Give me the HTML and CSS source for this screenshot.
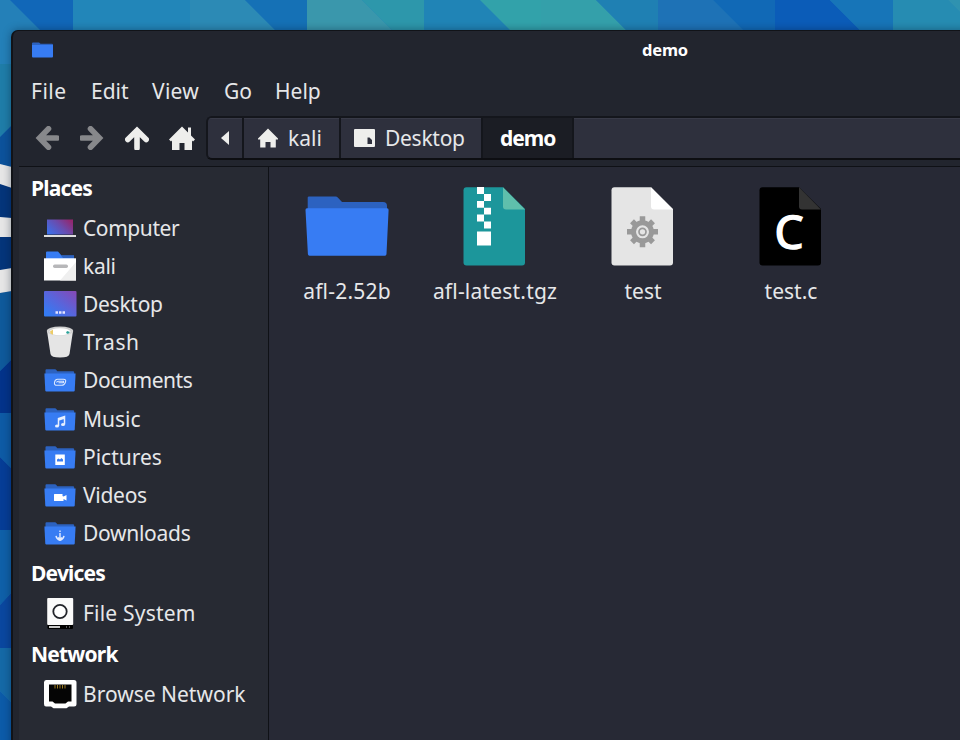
FILE: index.html
```html
<!DOCTYPE html>
<html lang="en">
<head>
<meta charset="utf-8">
<title>demo</title>
<link rel="stylesheet" href="styles.css">
</head>
<body>
<svg class="wallpaper" viewBox="0 0 960 740" aria-hidden="true">
  <rect width="960" height="740" fill="#2480b8"/>
  <path d="M10 0H73V31H41Z" fill="#1167b8"/>
  <path d="M73 0H190V31H73Z" fill="#2286b9"/>
  <path d="M190 0H245L276 31H190Z" fill="#2c8ab5"/>
  <path d="M245 0H307V31H276Z" fill="#1571b6"/>
  <path d="M307 0H362L393 31H307Z" fill="#3a97ac"/>
  <path d="M362 0H424V31H393Z" fill="#2d97ab"/>
  <path d="M424 0H480L511 31H424Z" fill="#2084b6"/>
  <path d="M480 0H541V31H511Z" fill="#32a2aa"/>
  <path d="M541 0H596L627 31H541Z" fill="#34a0aa"/>
  <path d="M596 0H658V31H627Z" fill="#1f80b3"/>
  <path d="M658 0H713L744 31H658Z" fill="#1e72b6"/>
  <path d="M713 0H775V31H744Z" fill="#1169b6"/>
  <path d="M775 0H830L861 31H775Z" fill="#0b5cb8"/>
  <path d="M830 0H893V31H861Z" fill="#1775b8"/>
  <path d="M893 0H948L979 31H893Z" fill="#268cb2"/>
  <path d="M948 0H960V12Z" fill="#2f92b0"/>
  <path d="M0 64H12V125L0 137Z" fill="#1f7da8"/>
  <path d="M0 137L12 125V180H0Z" fill="#0c529b"/>
  <path d="M0 175H12V300H0Z" fill="#04357a"/>
  <path d="M0 293L12 291V359L0 371Z" fill="#0f5a9b"/>
  <path d="M0 164L12 167V188L0 184ZM0 217L12 218V237H0ZM0 270L12 268V291L0 293Z" fill="#e6e6e6"/>
  <path d="M0 371L12 359V413H0Z" fill="#03338a"/>
  <path d="M0 413H12V469L0 457Z" fill="#0e5ba5"/>
  <path d="M0 457L12 469V530H0Z" fill="#063d96"/>
  <path d="M0 530H12V592L0 605Z" fill="#0f60a8"/>
  <path d="M0 605L12 592V648H0Z" fill="#0a479f"/>
  <path d="M0 648H12V703L0 691Z" fill="#1569a6"/>
  <path d="M0 691L12 703V740H0Z" fill="#0c5ba8"/>
</svg>

<svg class="symbols" aria-hidden="true">
  <symbol id="folder" viewBox="0 0 32 24">
    <path d="M1.500 1.500q0-1 1-1H11q.8 0 1.300.7L13.300 2.500H29q1.200 0 1.200 1.200V10H1.500Z" fill="#2c62c0"/>
    <path d="M.4 4.700H31.600L30.700 22q-.1.800-1 .8H2.300q-.9 0-1-.8Z" fill="#377cf3"/>
  </symbol>
  <symbol id="house" viewBox="0 0 20 20">
    <path d="M10 .5L0 10.500V11.500H2.200V19.500H7.500V14H12.500V19.500H17.800V11.500H20V10.500Z" fill="#eeeeec"/>
  </symbol>
</svg>

<main class="window">
  <header class="titlebar">
    <svg class="app-icon" viewBox="0 0 21 16"><path d="M0 1.500Q0 .5 1 .5H7L8.500 1.700H20Q21 1.700 21 2.500V6H0Z" fill="#2c62c0"/><path d="M0 3H21V14.500Q21 15.500 20 15.500H1Q0 15.500 0 14.500Z" fill="#377cf3"/></svg>
    <h1>demo</h1>
  </header>
  <nav class="menubar"><span class="m-file">File</span><span class="m-edit">Edit</span><span class="m-view">View</span><span class="m-go">Go</span><span>Help</span></nav>
  <div class="toolbar">
    <svg class="nav-icon dim" viewBox="0 0 24 24"><path d="M13.500 2.800L4.500 12L13.500 21.200M5.500 12H22" /></svg>
    <svg class="nav-icon dim" viewBox="0 0 24 24"><path d="M10.500 2.800L19.500 12L10.500 21.200M18.500 12H2" /></svg>
    <svg class="nav-icon" viewBox="0 0 24 24"><path d="M2.800 13.500L12 4.500L21.200 13.500M12 5.500V22" /></svg>
    <svg class="home-icon" viewBox="0 0 26 24"><path d="M13 .5L0 13.500L2 15.500L3 14.500V24H10.500V17H15.500V24H23V14.500L24 15.500L26 13.500L22 9.500V1.500H19V6.500Z"/></svg>
    <div class="pathbar">
      <div class="crumb crumb-back"><svg viewBox="0 0 8 14"><path d="M8 0V14L0 7Z" fill="#eeeeec"/></svg></div>
      <div class="crumb crumb-kali"><svg viewBox="0 0 20 20"><use href="#house"/></svg><span>kali</span></div>
      <div class="crumb crumb-desktop"><svg viewBox="0 0 21 18"><path fill-rule="evenodd" d="M1 0H20Q21 0 21 1V17Q21 18 20 18H1Q0 18 0 17V1Q0 0 1 0ZM13.500 8.500V15H18V11L15.500 8.500Z" fill="#eeeeec"/></svg><span class="tight">Desktop</span></div>
      <div class="crumb crumb-demo"><b>demo</b></div>
      <div class="crumb crumb-rest"></div>
    </div>
  </div>
  <div class="content">
    <aside class="sidebar">
      <h2>Places</h2>
      <div class="place"><svg viewBox="0 0 34 32"><defs><linearGradient id="pc" x1="0" y1=".8" x2="1" y2=".2"><stop stop-color="#3d6fe8"/><stop offset=".55" stop-color="#694cae"/><stop offset="1" stop-color="#93276f"/></linearGradient></defs><rect x="4" y="7.500" width="26" height="15" fill="url(#pc)"/><rect x="1" y="23" width="32" height="2" fill="#dedede"/></svg><span class="tighter">Computer</span></div>
      <div class="place"><svg viewBox="0 0 34 32"><path d="M3 10V2.500Q3 1.500 4 1.500H15L18.500 5.500H31V10Z" fill="#377cf3"/><path d="M18 5.500H31V8H20Z" fill="#2c62c0"/><path d="M1 8.300H33V30.500H1Z" fill="#fff"/><path d="M33 12V30.500H17Z" fill="#efefef"/><rect x="10" y="14.500" width="15" height="3.500" rx="1.700" fill="#b7b7b9"/></svg><span class="tight">kali</span></div>
      <div class="place"><svg viewBox="0 0 34 32"><defs><linearGradient id="dt" x1="0" y1="1" x2="1" y2="0"><stop offset=".1" stop-color="#347bf3"/><stop offset=".5" stop-color="#5865dc"/><stop offset="1" stop-color="#8748b4"/></linearGradient></defs><rect x="1" y="3" width="32.500" height="25.500" rx="1" fill="url(#dt)"/><path d="M12.500 23.300h2.500v2.500h-2.500zM16 23.300h2.500v2.500H16zM19.500 23.300H22v2.500h-2.500z" fill="#e4e4ff"/></svg><span class="tight">Desktop</span></div>
      <div class="place"><svg viewBox="0 0 34 32"><path d="M4 5L7.500 28Q8 31.500 17 31.500Q26 31.500 26.500 28L30 5Z" fill="#e5e5e5"/><ellipse cx="17" cy="5" rx="13.200" ry="4.500" fill="#d0d0d0"/><ellipse cx="17" cy="5.800" rx="10.500" ry="3.500" fill="#fff"/><path d="M7 5.500L10 3.500V8.800L7.500 7.500Z" fill="#eccb66"/><path d="M24 5l3 1-2 2-2-1z" fill="#2aa198"/></svg><span class="wide">Trash</span></div>
      <div class="place"><svg viewBox="0 0 34 32"><use href="#folder" x="1" y="4.700" width="32" height="24"/><g fill="none" stroke="#dce8ff" stroke-width="1.100"><path d="M13.500 18.500Q14 17.200 15.500 17.200H20.500Q21 18.800 19.500 18.800H15.500"/><path d="M14.500 15.300H20.500Q23.500 15.300 22.500 18Q21.500 21.300 18.500 21.300H14Q11 21.300 11.500 18.500Q12 15.300 14.500 15.300Z"/></g></svg><span class="tighter">Documents</span></div>
      <div class="place"><svg viewBox="0 0 34 32"><use href="#folder" x="1" y="4.700" width="32" height="24"/><path d="M15.500 23V15.500L21.500 13.500V21.500M15.500 17L21.500 15" fill="none" stroke="#e8f0ff" stroke-width="1.500"/><ellipse cx="14" cy="23" rx="2" ry="1.600" fill="#e8f0ff"/><ellipse cx="20" cy="21.500" rx="2" ry="1.600" fill="#e8f0ff"/></svg><span>Music</span></div>
      <div class="place"><svg viewBox="0 0 34 32"><use href="#folder" x="1" y="4.700" width="32" height="24"/><rect x="12.300" y="13.500" width="9.500" height="10.500" fill="#fff"/><path d="M14 20.500V18.500L15.500 17.500L17 18.500L18.500 17L20 18.500V20.500Z" fill="#377cf3"/></svg><span>Pictures</span></div>
      <div class="place"><svg viewBox="0 0 34 32"><use href="#folder" x="1" y="4.700" width="32" height="24"/><path d="M11 15.500Q11 15 11.500 15H19.500V17L20.500 17.500L23.500 16V21.500L20.500 20V22H11.500Q11 22 11 21.500Z" fill="#fff"/></svg><span class="tight">Videos</span></div>
      <div class="place"><svg viewBox="0 0 34 32"><use href="#folder" x="1" y="4.700" width="32" height="24"/><path d="M17 13.500V15M17 16V22.500M13 18.800Q13.500 22 17 23.300Q20.500 22 21 18.800M15 20.500L17 22.500L19 20.500" fill="none" stroke="#e0eaff" stroke-width="1.400"/></svg><span class="tight">Downloads</span></div>
      <h2>Devices</h2>
      <div class="place"><svg viewBox="0 0 34 32"><rect x="4.500" y="5" width="25.500" height="27" rx="1" fill="#000"/><rect x="4.200" y="1" width="26" height="27" rx="1" fill="#fafafa"/><circle cx="17" cy="14.500" r="6.700" fill="#fff" stroke="#22242a" stroke-width="1.800"/><rect x="6" y="29" width="11" height="2" fill="#c8c8c8"/><path d="M23.500 29v2M26.500 29v2" stroke="#555"/></svg><span class="loose">File System</span></div>
      <h2>Network</h2>
      <div class="place"><svg viewBox="0 0 34 32"><path d="M3 2H31Q33.500 2 33.500 4.500V26Q33.500 28.500 31 28.500H26L23.500 30.300H10.500L8 28.500H3Q1 28.500 1 26V4.500Q1 2 3 2Z" fill="#fff"/><path d="M6 6.500H28.500V23.500H25L22.500 25.500H12L9.500 23.500H6Z" fill="#050505"/><path d="M12 7v3.500M14.500 7v3.500M17 7v3.500M19.500 7v3.500M22 7v3.500" stroke="#9c7b20"/></svg><span>Browse Network</span></div>
    </aside>
    <section class="files">
      <figure><svg viewBox="0 0 84 80"><path d="M2.700 10.500Q2.700 9.500 4 9.500H30.500Q32 9.500 33 10.700L37 15H78Q82 15 82 19V30H2.700Z" fill="#2c62c0"/><path d="M.5 23Q.4 21.300 2 21.300H82Q83.700 21.300 83.600 23L81.500 67Q81.400 68.700 80 68.700H4.500Q3 68.700 2.900 67Z" fill="#377cf3"/></svg><figcaption class="loose">afl-2.52b</figcaption></figure>
      <figure><svg viewBox="0 0 84 80"><path d="M13.500.2H50L72 22V75.500Q72 78.500 69 78.500H13.500Q10.500 78.500 10.500 75.500V3.200Q10.500.2 13.500.2Z" fill="#1c969b"/><path d="M50 .2L72 22.500H53Q50 22.500 50 19.500Z" fill="#5fbfac"/><path d="M24 0h7v7h-7zM31 7h7v7h-7zM24 14h7v6.800h-7zM31 20.800h7v6.800h-7zM24 27.600h7v6.800h-7zM31 34.400h7v7h-7zM24 44.500h14v14H24z" fill="#fff"/></svg><figcaption class="loose">afl-latest.tgz</figcaption></figure>
      <figure><svg viewBox="0 0 84 80"><path d="M13.500.2H50L72 22V75.500Q72 78.500 69 78.500H13.500Q10.500 78.500 10.500 75.500V3.200Q10.500.2 13.500.2Z" fill="#e5e5e5"/><path d="M50 .2L72 22.500H53Q50 22.500 50 19.500Z" fill="#fff"/><g transform="translate(41.500 44.800)" fill="none" stroke="#999"><circle r="9" stroke-width="5"/><circle r="3.500" stroke-width="1.700"/><path d="M0-15.500V-10M0 15.500V10M-15.500 0H-10M15.500 0H10M-10.500-10.500L-7-7M10.500 10.500L7 7M-10.500 10.500L-7 7M10.500-10.500L7-7" stroke-width="5.500"/></g></svg><figcaption>test</figcaption></figure>
      <figure><svg viewBox="0 0 84 80"><path d="M13.500.2H50L72 22V75.500Q72 78.500 69 78.500H13.500Q10.500 78.500 10.500 75.500V3.200Q10.500.2 13.500.2Z" fill="#000"/><path d="M50 .2L72 22.500H53Q50 22.500 50 19.500Z" fill="#333"/><text class="c-letter" x="25.500" y="61.500">C</text></svg><figcaption>test.c</figcaption></figure>
    </section>
  </div>
</main>
</body>
</html>
```
FILE: styles.css
```css
* { box-sizing: border-box; }
body {
  margin: 0;
  width: 960px;
  height: 740px;
  overflow: hidden;
  padding: 30px 0 0 11px;
  font: 21px/30px "Noto Sans", sans-serif;
  color: #e6e7e9;
}
.wallpaper { position: absolute; left: 0; top: 0; width: 960px; height: 740px; z-index: -1; }
.symbols { position: absolute; width: 0; height: 0; }
.window {
  width: 960px;
  height: 720px;
  background: #22252e;
  border: 1px solid #111318;
  border-left-width: 2px;
  border-right: 0;
  border-radius: 7px 0 0 0;
  box-shadow: 0 0 9px rgba(0, 20, 40, .4);
}
.titlebar { height: 38px; display: flex; align-items: center; padding-left: 19px; }
.app-icon { width: 21px; height: 16px; }
.titlebar h1 { margin: 0 0 0 589px; font-size: 16.500px; line-height: 24px; letter-spacing: -.2px; color: #fff; }
.menubar { height: 44px; display: flex; align-items: center; padding-left: 18px; }
.m-file { width: 60px; letter-spacing: .5px; }
.m-edit { width: 61px; }
.m-view { width: 72px; letter-spacing: .3px; }
.m-go { width: 51px; }
.toolbar { height: 53px; display: flex; align-items: center; padding: 0 0 4px 22px; }
.nav-icon { width: 24px; height: 24px; margin-right: 21px; fill: none; stroke: #eeeeec; stroke-width: 5.600; stroke-linecap: round; flex: none; }
.nav-icon.dim { stroke: #87888b; }
.home-icon { width: 26px; height: 24px; fill: #eeeeec; margin: 0 11px 0 -1px; flex: none; }
.pathbar {
  flex: 1;
  height: 44px;
  display: flex;
  background: #2e303d;
  border: 2px solid #14161c;
  border-bottom-color: #0d0e12;
  border-right: 0;
  border-radius: 6px 0 0 6px;
  overflow: hidden;
}
.crumb { display: flex; align-items: center; border-right: 2px solid #14161c; box-shadow: inset 0 1px #383a47; }
.crumb-back { width: 36px; padding-left: 13px; }
.crumb-back svg { width: 8px; height: 14px; }
.crumb-kali { width: 97px; padding-left: 14px; }
.crumb-kali svg { width: 20px; height: 20px; margin-right: 10px; }
.crumb-desktop { width: 142px; padding-left: 13px; }
.crumb-desktop svg { width: 21px; height: 18px; margin-right: 10px; }
.crumb-demo { width: 91px; padding-left: 17px; background: #1b1d24; box-shadow: none; color: #fff; letter-spacing: -1px; }
.crumb-rest { flex: 1; border: 0; }
.content {
  height: 584px;
  margin-left: 6px;
  display: flex;
  background: #272935;
  border-top: 1px solid #0f1116;
}
.sidebar { width: 250px; border-right: 1px solid #0f1116; background: #272a33; flex: none; }
.sidebar h2 { margin: 0; height: 42.500px; padding-left: 12px; display: flex; align-items: center; font-size: 21px; line-height: 30px; letter-spacing: -.8px; color: #fff; }
.sidebar h2:first-child { height: 42px; }
.place { height: 38.100px; padding-left: 24px; display: flex; align-items: center; white-space: nowrap; }
.place svg { width: 34px; height: 32px; margin-right: 6px; flex: none; }
.tight { letter-spacing: -.28px; }
.tighter { letter-spacing: -.42px; }
.loose { letter-spacing: .2px; }
.wide { letter-spacing: .6px; }
.files { display: flex; padding: 20px 0 0 4px; }
.files figure { margin: 0; width: 148px; display: flex; flex-direction: column; align-items: center; }
.files svg { width: 84px; height: 80px; }
.files figcaption { margin-top: 9px; white-space: nowrap; }
.c-letter { font: 46px "Noto Sans", sans-serif; fill: #fff; stroke: #fff; stroke-width: 1.5px; }
```
